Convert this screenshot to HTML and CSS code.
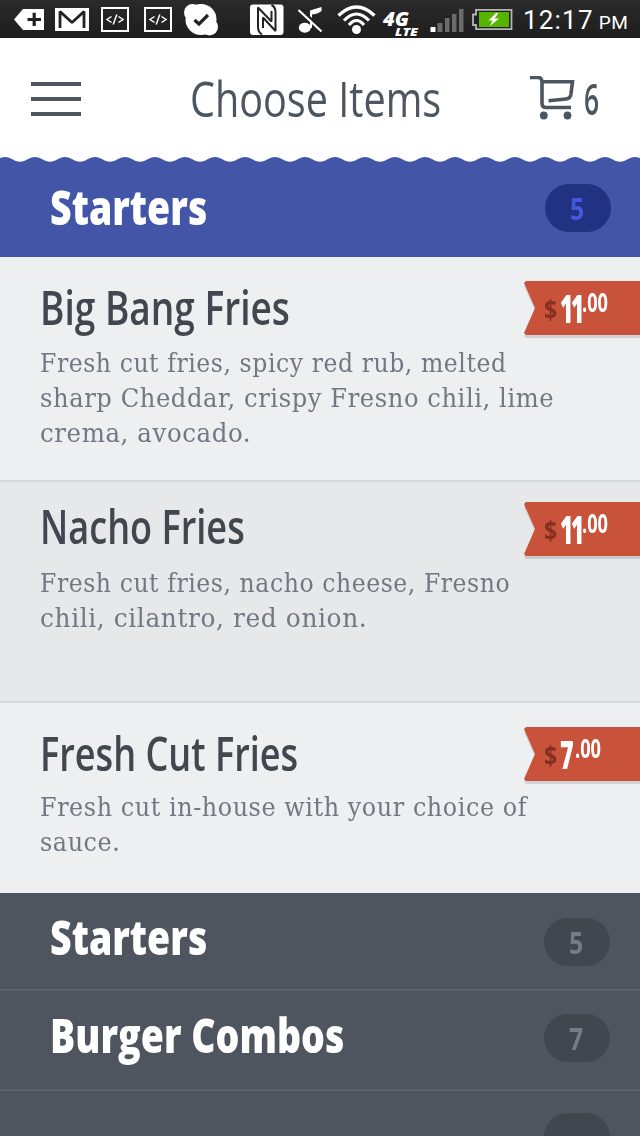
FILE: index.html
```
<!DOCTYPE html>
<html lang="en">

<head>
    <meta charset="UTF-8">
    <meta name="viewport" content="width=device-width, initial-scale=1.0">
    <title>Choose Items</title>
    <link rel="stylesheet" href="styles.css">
</head>

<body>
    <!-- phone status bar -->
    <div class="status">
        <svg class="status-icons" width="520" height="38" viewBox="0 0 520 38">
            <!-- back arrow with plus -->
            <path d="M14 19.500 L23 9 H44 V30 H23 Z" fill="#fff" />
            <path d="M27.500 19.500 H41 M34.200 12.800 V26" stroke="#222" stroke-width="3.200" />
            <!-- mail -->
            <rect x="55" y="8" width="34" height="23" fill="#fff" />
            <path d="M60 28 V11.500 L72 22.500 L84 11.500 V28" fill="none" stroke="#222" stroke-width="2.800" stroke-linejoin="bevel" />
            <!-- code x2 -->
            <g fill="none" stroke="#fff">
                <rect x="102" y="8" width="26" height="23" stroke-width="2" />
                <path d="M111.500 16.500 L107 19.500 L111.500 22.500 M118.500 16.500 L123 19.500 L118.500 22.500 M116.800 14.500 L113.200 24.500" stroke-width="1.500" />
                <rect x="145" y="8" width="26" height="23" stroke-width="2" />
                <path d="M154.500 16.500 L150 19.500 L154.500 22.500 M161.500 16.500 L166 19.500 L161.500 22.500 M159.800 14.500 L156.200 24.500" stroke-width="1.500" />
            </g>
            <!-- skype -->
            <circle cx="201" cy="19.500" r="15.500" fill="#fff" />
            <circle cx="192.500" cy="12.500" r="8.500" fill="#fff" />
            <circle cx="209.500" cy="27" r="8.500" fill="#fff" />
            <path d="M194.500 20 L199 24 L208 15" fill="none" stroke="#222" stroke-width="3.200" />
            <!-- nfc -->
            <rect x="250" y="4.500" width="33.500" height="30.500" rx="3" fill="#fff" />
            <path d="M262 34.500 Q258 32 258 27 V7.500 L271.500 21.500 V11" fill="none" stroke="#222" stroke-width="2" stroke-linejoin="bevel" />
            <path d="M271.500 5 Q275.500 7 275.500 12 V31 L263 17.500 V28" fill="none" stroke="#222" stroke-width="2" stroke-linejoin="bevel" />
            <!-- music off -->
            <ellipse cx="304.800" cy="27.800" rx="6" ry="5" fill="#fff" />
            <path d="M310 28 V10.500 L321.500 7 V11 Q318 14 312 14.500 V28 Z" fill="#fff" />
            <path d="M300 8.300 L323 30" stroke="#222" stroke-width="2.500" />
            <path d="M298.500 10 L321.500 31.500" stroke="#fff" stroke-width="2.200" />
            <!-- wifi -->
            <g fill="none" stroke="#fff" stroke-width="3.200">
                <path d="M338.500 15.500 Q356.500 -1.500 374.500 15.500" />
                <path d="M344 20.500 Q356.500 7.500 369 20.500" />
                <path d="M349 25 Q356.500 16 364 25" />
            </g>
            <circle cx="356.500" cy="29.500" r="4.500" fill="#fff" />
            <!-- network -->
            <text class="net" x="383" y="26" font-size="19" textLength="26" lengthAdjust="spacingAndGlyphs">4G</text>
            <text class="net" x="395" y="35.500" font-size="10.500" textLength="23" lengthAdjust="spacingAndGlyphs">LTE</text>
            <g fill="#6b6b6b">
                <rect x="430.500" y="27" width="5" height="5" fill="#fff" />
                <rect x="437.500" y="23" width="5" height="9" />
                <rect x="445" y="18" width="4.500" height="14" />
                <rect x="452" y="14" width="4.500" height="18" />
                <rect x="459" y="9" width="4.500" height="23" />
            </g>
            <!-- battery -->
            <path d="M476 9.800 H511.500 V29.200 H476 V25 H473 V14.500 H476 Z" fill="#222" stroke="#b5b5b5" stroke-width="1.800" />
            <rect x="479" y="12" width="30" height="15" fill="#56b400" />
            <path d="M496 13 L488.500 20.500 H492.500 L490 26 L499 18.500 H494.500 L498.500 13 Z" fill="#fff" />
        </svg>
        <div class="clock">12:17<small>PM</small></div>
    </div>

    <!-- header -->
    <header class="header">
        <div class="menu"><i></i><i></i><i></i></div>
        <h1 class="title"><span>Choose Items</span></h1>
        <div class="cart">
            <svg width="46" height="46" viewBox="0 0 46 46">
                <g fill="none" stroke="#4d555e" stroke-width="3.600">
                    <path d="M0 1.500 H8 Q12 1.500 12 6 V27 Q12 31.500 16 31.500 H41" />
                    <path d="M12 5.800 H42.500 L40.800 19 Q40.200 22.500 36 23 L18.500 24.800" />
                </g>
                <circle cx="13.800" cy="39.500" r="3.900" fill="#4d555e" />
                <circle cx="37.500" cy="39.500" r="3.900" fill="#4d555e" />
            </svg>
            <span class="cart-count">6</span>
        </div>
    </header>

    <!-- open category -->
    <section class="category open">
        <svg class="wave" width="640" height="6" viewBox="0 0 640 6">
            <defs>
                <pattern id="scallop" x="5" width="30" height="6" patternUnits="userSpaceOnUse">
                    <path d="M0 0 C6 0 9 4.700 15 4.700 C21 4.700 24 0 30 0 Z" fill="#fff" />
                </pattern>
            </defs>
            <rect width="640" height="6" fill="url(#scallop)" />
        </svg>
        <h2><span>Starters</span></h2>
        <div class="pill"><span>5</span></div>
    </section>

    <article class="item first">
        <h3><span>Big Bang Fries</span></h3>
        <p>
            <span class="l1">Fresh cut fries, spicy red rub, melted</span>
            <span class="l2">sharp Cheddar, crispy Fresno chili, lime</span>
            <span class="l3">crema, avocado.</span>
        </p>
        <div class="price"><span class="cur">$</span><span class="num">11</span><span class="dec">.00</span></div>
    </article>

    <article class="item second">
        <h3><span>Nacho Fries</span></h3>
        <p>
            <span class="l1">Fresh cut fries, nacho cheese, Fresno</span>
            <span class="l2">chili, cilantro, red onion.</span>
        </p>
        <div class="price"><span class="cur">$</span><span class="num">11</span><span class="dec">.00</span></div>
    </article>

    <article class="item third">
        <h3><span>Fresh Cut Fries</span></h3>
        <p>
            <span class="l1">Fresh cut in-house with your choice of</span>
            <span class="l2">sauce.</span>
        </p>
        <div class="price seven"><span class="cur">$</span><span class="num">7</span><span class="dec">.00</span></div>
    </article>

    <!-- closed categories -->
    <section class="category">
        <h2><span>Starters</span></h2>
        <div class="pill"><span>5</span></div>
    </section>
    <section class="category burgers">
        <h2><span>Burger Combos</span></h2>
        <div class="pill"><span>7</span></div>
    </section>
    <section class="category last">
        <div class="pill"></div>
    </section>
</body>

</html>
```
FILE: styles.css
```
* {
    box-sizing: border-box;
}

html,
body {
    margin: 0;
    padding: 0;
    width: 640px;
    height: 1136px;
    overflow: hidden;
    font-family: "Open Sans", sans-serif;
    background: #4e555e;
}

h1,
h2,
h3,
p {
    margin: 0;
}

/* every label is squeezed to look condensed */
h1 span,
h2 span,
h3 span,
p span,
.pill span,
.price span,
.cart-count {
    display: block;
    white-space: nowrap;
    transform-origin: 0 50%;
}

/* status bar */
.status {
    display: flex;
    height: 38px;
    background: linear-gradient(#2a2a2a, #1e1e1e);
    color: #fff;
}

.status-icons {
    flex: none;
}

.net {
    font-family: "Open Sans", sans-serif;
    font-weight: 800;
    font-style: italic;
    fill: #fff;
}

.clock {
    padding-left: 3px;
    font: 26px/40px Roboto, sans-serif;
    letter-spacing: 1.2px;
    white-space: nowrap;
}

.clock small {
    margin-left: 5px;
    font-size: 19px;
    letter-spacing: .4px;
}

/* header */
.header {
    display: flex;
    height: 119px;
    background: #fff;
    color: #4d555e;
}

.menu {
    width: 160px;
    padding: 44px 0 0 31px;
}

.menu i {
    display: block;
    width: 50px;
    height: 4px;
    margin-bottom: 11px;
    background: #4d555e;
}

.title {
    width: 370px;
    padding: 30px 0 0 30px;
    font-size: 50px;
    line-height: 60px;
    font-weight: 400;
}

.title span {
    transform: scaleX(.792);
}

.cart {
    display: flex;
    padding-top: 38px;
}

.cart-count {
    margin-left: 8px;
    font-size: 44px;
    line-height: 44px;
    font-weight: 600;
    transform: scaleX(.6);
}

/* categories */
.category {
    position: relative;
    display: flex;
    justify-content: space-between;
    height: 98px;
    padding: 17px 30px 0 50px;
    border-bottom: 2px solid #596069;
    background: #4e555e;
    color: #fff;
}

.category h2 {
    width: 300px;
    font-size: 47px;
    line-height: 54px;
    font-weight: 800;
}

.category h2 span {
    transform: scaleX(.798);
}

.pill {
    width: 66px;
    height: 48px;
    margin-top: 8px;
    border-radius: 24px;
    background: #40474f;
    color: #747d85;
    font-size: 31px;
    line-height: 48px;
    font-weight: 700;
}

.pill span {
    padding-left: 25px;
    transform-origin: 25px 50%;
    transform: scaleX(.8);
}

.open {
    height: 100px;
    padding: 23px 29px 0 50px;
    border: 0;
    background: #4355a6;
}

.open .pill {
    margin-top: 4px;
    background: #213283;
    color: #4259d9;
}

.burgers {
    height: 100px;
}

.burgers .pill {
    margin-top: 6px;
}

.last {
    justify-content: flex-end;
    border: 0;
    height: 45px;
    overflow: hidden;
}

.last .pill {
    margin-top: 5px;
}

.wave {
    position: absolute;
    top: 0;
    left: 0;
}

/* menu items */
.item {
    position: relative;
    height: 225px;
    padding: 23px 0 0 40px;
    border-bottom: 2px solid #d6d7d9;
    background: #edeff1;
}

.item h3 {
    color: #40474e;
    font-size: 47px;
    line-height: 54px;
    font-weight: 600;
}

.item h3 span {
    transform: scaleX(.768);
}

.first h3 span {
    transform: scaleX(.788);
}

.item p {
    margin-top: 12px;
    color: #707883;
    font: 25.5px/35px "DejaVu Serif", serif;
    letter-spacing: .6px;
}

.first .l1,
.second .l1 {
    transform: scaleX(.924);
}

.first .l2 {
    transform: scaleX(.95);
}

.first .l3 {
    transform: scaleX(.96);
}

.second .l2 {
    transform: scaleX(.976);
}

.third .l1,
.third .l2 {
    transform: scaleX(.937);
}

.second {
    height: 221px;
    padding-top: 17px;
    background: #e7e8ea;
}

.second p {
    margin-top: 13px;
}

.third {
    height: 190px;
    border: 0;
}

.third p {
    margin-top: 10px;
}

/* price ribbon, laid over the right edge of the item */
.price {
    position: absolute;
    top: 24px;
    right: 0;
    display: flex;
    width: 116px;
    height: 57px;
    padding-left: 20px;
    color: #fff;
    font-weight: 700;
    filter: drop-shadow(0 3px 0 rgba(0, 0, 0, .12));
}

.price::before {
    content: "";
    position: absolute;
    top: 0;
    left: 0;
    width: 116px;
    height: 54px;
    background: #c9523b;
    clip-path: polygon(2px 0, 100% 0, 100% 100%, 2px 100%, 0 52px, 11px 27px, 0 2px);
}

.second .price {
    top: 20px;
}

.price span {
    position: relative;
}

.price .cur {
    width: 16px;
    color: #842f20;
    font-size: 27px;
    line-height: 56px;
    transform: scaleX(.85);
}

.price .num {
    width: 22px;
    font-size: 39px;
    line-height: 53px;
    font-weight: 800;
    letter-spacing: -4px;
    transform: scaleX(.58);
}

.price .dec {
    font-size: 26px;
    line-height: 43px;
    transform: scaleX(.7);
}

.price.seven .num {
    width: 15px;
    transform: scaleX(.6);
}
```
